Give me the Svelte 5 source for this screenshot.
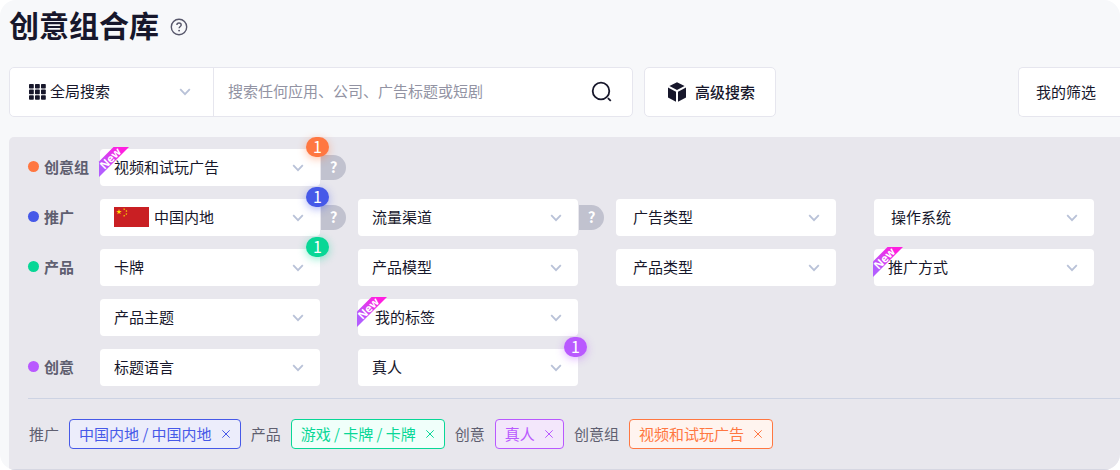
<script>
  const groups = [
    {
      name: '创意组',
      color: '#ff7741',
      filters: [{ label: '视频和试玩广告', isNew: true, count: 1, help: true }]
    },
    {
      name: '推广',
      color: '#4659e8',
      filters: [
        { label: '中国内地', flag: true, count: 1, help: true },
        { label: '流量渠道', help: true },
        { label: '广告类型', indent: true },
        { label: '操作系统', indent: true }
      ]
    },
    {
      name: '产品',
      color: '#08d796',
      filters: [
        { label: '卡牌', count: 1 },
        { label: '产品模型' },
        { label: '产品类型', indent: true },
        { label: '推广方式', isNew: true },
        { label: '产品主题' },
        { label: '我的标签', isNew: true, indent: true }
      ]
    },
    {
      name: '创意',
      color: '#b959ff',
      filters: [{ label: '标题语言' }, { label: '真人', count: 1 }]
    }
  ];

  let chips = $state([
    { group: '推广', text: '中国内地 / 中国内地', tone: 'blue' },
    { group: '产品', text: '游戏 / 卡牌 / 卡牌', tone: 'green' },
    { group: '创意', text: '真人', tone: 'purple' },
    { group: '创意组', text: '视频和试玩广告', tone: 'orange' }
  ]);

  let query = $state('');
</script>

{#snippet chevron()}
  <svg class="chevron" viewBox="0 0 12 8" aria-hidden="true">
    <path d="M1.2 1.2 6 6.2l4.8-5" fill="none" stroke="currentColor" stroke-width="1.8" />
  </svg>
{/snippet}

{#snippet star(x, y, r, turn)}
  <polygon
    points="0,-1 .225,-.309 .951,-.309 .363,.118 .588,.809 0,.382 -.588,.809 -.363,.118 -.951,-.309 -.225,-.309"
    fill="#ffde00"
    transform="translate({x} {y}) rotate({turn}) scale({r})"
  />
{/snippet}

<main class="page">
  <header class="title">
    <h1>创意组合库</h1>
    <button class="about" aria-label="?">
      <svg viewBox="0 0 18 18" aria-hidden="true">
        <g fill="none" stroke="currentColor" stroke-width="1.4">
          <circle cx="9" cy="9" r="7.7" />
          <path d="M6.9 7.1c0-1.3.9-2.1 2.1-2.1s2.2.8 2.2 1.9c0 1.5-2.1 1.6-2.1 3.4" />
        </g>
        <circle cx="9.1" cy="12.6" r=".95" fill="currentColor" />
      </svg>
    </button>
  </header>

  <div class="toolbar">
    <form class="search" role="search" onsubmit={(e) => e.preventDefault()}>
      <div class="scope">
        <svg class="grid-icon" viewBox="0 0 17 16" aria-hidden="true">
          {#each [0, 6, 12] as x}
            {#each [0, 5.6, 11.2] as y}
              <rect {x} {y} width="4.8" height="4.6" rx=".8" fill="currentColor" />
            {/each}
          {/each}
        </svg>
        <select aria-label="全局搜索"><option>全局搜索</option></select>
        {@render chevron()}
      </div>
      <input
        type="search"
        placeholder="搜索任何应用、公司、广告标题或短剧"
        aria-label="搜索"
        bind:value={query}
      />
      <button class="go" aria-label="搜索">
        <svg viewBox="0 0 22 22" aria-hidden="true">
          <g fill="none" stroke="currentColor" stroke-width="1.8">
            <circle cx="10" cy="10" r="8.3" />
            <path d="m16.9 17.1 2.9 2.7" />
          </g>
        </svg>
      </button>
    </form>

    <button class="tool advanced">
      <svg viewBox="0 0 20 20" aria-hidden="true">
        <g fill="currentColor">
          <path d="M10 .2 17.6 4 10 8 2.4 4z" />
          <path d="M1 5.6 9 9.8V19.8L1 15.6z" />
          <path d="M19 5.6 11 9.8V19.8L19 15.6z" />
        </g>
      </svg>
      高级搜索
    </button>
    <button class="tool mine">我的筛选</button>
  </div>

  <section class="panel">
    <div class="groups">
      {#each groups as group}
        <div class="group" role="group" aria-label={group.name} style="--tone: {group.color}">
          <span class="name">{group.name}</span>
          <div class="filters">
            {#each group.filters as filter}
              <div class="filter" class:indent={filter.indent} class:flagged={filter.flag}>
                <select aria-label={filter.label}><option>{filter.label}</option></select>
                {@render chevron()}
                {#if filter.flag}
                  <svg class="flag" viewBox="0 0 35 20" aria-hidden="true">
                    <rect width="35" height="20" fill="#c91f23" />
                    {@render star(5, 5, 2.9, 0)}
                    {@render star(10.2, 2.2, 1.2, 20)}
                    {@render star(12.4, 4, 1.2, 45)}
                    {@render star(12.4, 7, 1.2, 0)}
                    {@render star(10.2, 8.8, 1.2, 20)}
                  </svg>
                {/if}
                {#if filter.isNew}
                  <svg class="ribbon" viewBox="0 0 30 30" aria-hidden="true">
                    <defs>
                      <linearGradient id="ribbon-fill" x1="0" y1="1" x2="1" y2="0">
                        <stop offset=".2" stop-color="#b45cff" />
                        <stop offset=".8" stop-color="#ff1fe0" />
                      </linearGradient>
                    </defs>
                    <path d="M14.5 0H30L0 30V14.5z" fill="url(#ribbon-fill)" />
                    <text transform="translate(14.2 14.2) rotate(-45)" text-anchor="middle">New</text>
                  </svg>
                {/if}
                {#if filter.help}
                  <button class="help">?</button>
                {/if}
                {#if filter.count}
                  <span class="badge">{filter.count}</span>
                {/if}
              </div>
            {/each}
          </div>
        </div>
      {/each}
    </div>

    <div class="chosen">
      {#each chips as chip (chip.group)}
        <span>{chip.group}</span>
        <span class="chip {chip.tone}">
          {chip.text}
          <button
            aria-label="× {chip.text}"
            onclick={() => (chips = chips.filter((c) => c.group !== chip.group))}
          >
            <svg viewBox="0 0 8 8" aria-hidden="true">
              <path d="m.3.3 7.4 7.4M7.7.3.3 7.7" stroke="currentColor" />
            </svg>
          </button>
        </span>
      {/each}
    </div>
  </section>
</main>

<style>
  :global(body) {
    background: #fff;
  }

  .page,
  .page * {
    box-sizing: border-box;
  }

  .page {
    overflow: hidden;
    padding-left: 9px;
    border-radius: 16px;
    background: #f7f8fa;
    color: #17172b;
    font: 15px/22px 'Noto Sans CJK SC', sans-serif;
  }

  svg {
    display: block;
    flex: none;
  }

  button,
  select,
  input {
    margin: 0;
    padding: 0;
    border: 0;
    border-radius: 0;
    background: none;
    color: inherit;
    font: inherit;
    appearance: none;
  }

  button,
  select {
    cursor: pointer;
  }

  .title {
    display: flex;
    align-items: center;
    gap: 11px;
    height: 54px;
  }

  h1 {
    margin: 0;
    padding-bottom: 6px;
    font-size: 30px;
    line-height: 44px;
    font-weight: 700;
  }

  .about {
    color: #57576b;
  }

  .about svg {
    width: 18px;
    height: 18px;
  }

  .toolbar {
    display: flex;
    gap: 11px;
    margin-top: 13px;
  }

  .search,
  .tool {
    display: flex;
    align-items: center;
    height: 50px;
    border: 1px solid #e6e6ee;
    border-radius: 5px;
    background: #fff;
  }

  .search {
    flex: 0 1 624px;
  }

  .scope {
    position: relative;
    display: flex;
    flex: 0 0 204px;
    align-items: center;
    align-self: stretch;
    border-right: 1px solid #e6e6ee;
  }

  .scope select {
    width: 100%;
    height: 100%;
    padding-bottom: 2px;
    padding-left: 40px;
  }

  .grid-icon {
    position: absolute;
    left: 19px;
    width: 17px;
    height: 16px;
    pointer-events: none;
  }

  .chevron {
    position: absolute;
    top: 50%;
    right: 16px;
    width: 12px;
    height: 8px;
    margin-top: -4px;
    color: #b9c2d8;
    pointer-events: none;
  }

  .scope .chevron {
    right: 22px;
  }

  input {
    flex: 1;
    min-width: 0;
    padding-bottom: 2px;
    padding-left: 14px;
    outline: none;
  }

  input::placeholder {
    color: #9293a3;
    opacity: 1;
  }

  .go {
    padding: 0 19px;
  }

  .go svg {
    width: 22px;
    height: 22px;
  }

  .tool {
    padding-bottom: 1px;
    white-space: nowrap;
  }

  .advanced {
    gap: 8px;
    padding-right: 20px;
    padding-left: 22px;
    font-weight: 500;
  }

  .advanced svg {
    width: 20px;
    height: 20px;
  }

  .mine {
    margin-left: auto;
    padding-right: 24px;
    padding-left: 17px;
    border-right: 0;
    border-radius: 5px 0 0 5px;
  }

  .panel {
    margin-top: 20px;
    border-bottom: 1px solid #d6d7e2;
    border-radius: 5px 0 0 0;
    background: #e8e7ed;
  }

  .groups {
    display: grid;
    gap: 13px;
    margin-left: 19px;
    padding: 12px 26px 12px 0;
  }

  .group {
    display: flex;
    align-items: flex-start;
  }

  .name {
    display: flex;
    flex: 0 0 72px;
    align-items: center;
    gap: 5px;
    height: 37px;
    padding-bottom: 2px;
    color: #5f5f70;
    font-weight: 700;
    white-space: nowrap;
  }

  .name::before {
    width: 11px;
    height: 11px;
    border-radius: 50%;
    background: var(--tone);
    content: '';
  }

  .filters {
    display: grid;
    flex: 1;
    grid-template-columns: repeat(4, minmax(0, 1fr));
    gap: 13px 38px;
  }

  .filter {
    position: relative;
    height: 37px;
  }

  .filter select {
    width: 100%;
    height: 100%;
    padding-bottom: 2px;
    padding-left: 14px;
    border-radius: 4px;
    background: #fff;
  }

  .filter.indent select {
    padding-left: 17px;
  }

  .filter.flagged select {
    padding-left: 54px;
  }

  .flag {
    position: absolute;
    top: 8px;
    left: 14px;
    width: 35px;
    height: 20px;
    pointer-events: none;
  }

  .ribbon {
    position: absolute;
    top: -2px;
    left: -1px;
    width: 30px;
    height: 30px;
    overflow: visible;
    pointer-events: none;
  }

  .ribbon text {
    fill: #fff;
    font: 700 11px/11px 'Open Sans', sans-serif;
  }

  .help {
    position: absolute;
    top: 6px;
    left: calc(100% + 1px);
    width: 25px;
    height: 25px;
    padding-bottom: 2px;
    border-radius: 0 13px 13px 0;
    background: #c1c2cf;
    color: #fff;
    font-weight: 700;
    text-align: center;
  }

  .badge {
    position: absolute;
    top: -12px;
    right: -9px;
    width: 23px;
    height: 20px;
    border-radius: 10px;
    background: var(--tone);
    box-shadow: 0 2px 8px color-mix(in srgb, var(--tone) 45%, transparent);
    color: #fff;
    font-size: 16px;
    line-height: 19px;
    text-align: center;
  }

  .chosen {
    display: flex;
    flex-wrap: wrap;
    align-items: center;
    gap: 10px;
    margin-left: 19px;
    padding: 20px 0 20px 1px;
    border-top: 1px solid #cdd3e3;
    color: #5f5f70;
  }

  .chip {
    display: flex;
    align-items: center;
    gap: 10px;
    height: 30px;
    padding: 0 10px 0 9px;
    border: 1px solid currentColor;
    border-radius: 4px;
    white-space: nowrap;
  }

  .chip svg {
    width: 8px;
    height: 8px;
  }

  .blue {
    background: #ecedfb;
    color: #4659e8;
  }

  .green {
    background: #f0fffa;
    color: #08d796;
  }

  .purple {
    background: #f3e7fb;
    color: #b959ff;
  }

  .orange {
    background: #fff4ef;
    color: #ff7741;
  }
</style>
